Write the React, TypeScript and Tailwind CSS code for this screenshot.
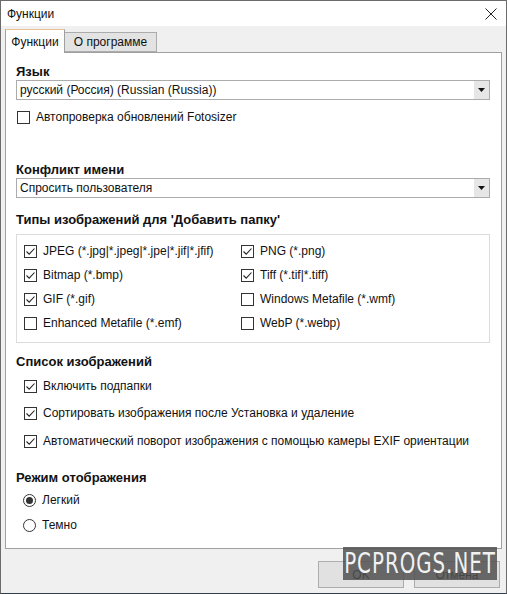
import React from 'react';

const UI_FONT = "font-['Liberation_Sans',Arial,sans-serif]";

function CheckBox({ checked }: { checked?: boolean }) {
  return (
    <span className="flex h-[13px] w-[13px] shrink-0 items-center justify-center border border-[#333] bg-white">
      {checked && (
        <svg width="11" height="11" viewBox="0 0 11 11" fill="none">
          <path d="M1.5 5.5 L4.2 8.2 L9.5 2.5" stroke="#222" strokeWidth="1.1" />
        </svg>
      )}
    </span>
  );
}

function Radio({ checked }: { checked?: boolean }) {
  return (
    <span className="flex h-[13px] w-[13px] shrink-0 items-center justify-center rounded-full border border-[#333] bg-white">
      {checked && <span className="h-[7px] w-[7px] rounded-full bg-[#333]" />}
    </span>
  );
}

function Option({ label, checked, className = '' }: { label: string; checked?: boolean; className?: string }) {
  return (
    <div className={`flex h-[15px] items-center gap-[6px] ${className}`}>
      <CheckBox checked={checked} />
      <span className="text-[12px] leading-[15px] text-[#111]">{label}</span>
    </div>
  );
}

function Select({ value, className = '' }: { value: string; className?: string }) {
  return (
    <div className={`flex h-[20px] items-stretch border border-[#acacac] bg-white ${className}`}>
      <span className="flex-1 pl-[3px] text-[12px] leading-[18px] text-[#111]">{value}</span>
      <span className="flex w-[15px] items-center justify-center bg-[#e6e6e6]">
        <svg width="7" height="4" viewBox="0 0 7 4">
          <path d="M0 0 H7 L3.5 4 Z" fill="#111" />
        </svg>
      </span>
    </div>
  );
}

function SectionLabel({ children, className = '' }: { children: React.ReactNode; className?: string }) {
  return <div className={`text-[13px] font-bold leading-[15px] text-[#111] ${className}`}>{children}</div>;
}

const imageTypes: [string, boolean][] = [
  ['JPEG (*.jpg|*.jpeg|*.jpe|*.jif|*.jfif)', true],
  ['PNG (*.png)', true],
  ['Bitmap (*.bmp)', true],
  ['Tiff (*.tif|*.tiff)', true],
  ['GIF (*.gif)', true],
  ['Windows Metafile (*.wmf)', false],
  ['Enhanced Metafile (*.emf)', false],
  ['WebP (*.webp)', false],
];

export default function App() {
  return (
    <div className={`relative flex h-[594px] w-[507px] flex-col border border-[#6b6b6b] border-b-[#2f3d4c] bg-[#f0f0f0] ${UI_FONT}`}>
      {/* Title bar */}
      <div className="flex h-[25px] shrink-0 items-center justify-between bg-white pl-[6px] pr-[9px]">
        <span className="text-[12px] text-[#111]">Функции</span>
        <svg width="12" height="12" viewBox="0 0 12 12">
          <path d="M0.5 0.5 L11.5 11.5 M11.5 0.5 L0.5 11.5" stroke="#222" strokeWidth="1" />
        </svg>
      </div>

      {/* Tabs */}
      <div className="flex h-[26px] shrink-0 items-end px-[4px]">
        <div className="relative z-10 -mb-px flex h-[24px] w-[60px] items-center justify-center border border-b-0 border-[#a0a0a0] border-t-[#e8c38f] bg-white text-[12px] text-[#111]">
          Функции
        </div>
        <div className="flex h-[20px] w-[92px] items-center justify-center border border-l-0 border-[#acacac] bg-[#e3e3e3] text-[12px] text-[#111]">
          О программе
        </div>
      </div>

      {/* Tab page */}
      <div className="mx-[4px] h-[497px] shrink-0 border border-[#a0a0a0] bg-white pl-[10px] pr-[11px]">
        <SectionLabel className="mt-[11px]">Язык</SectionLabel>
        <Select className="mt-[1px]" value="русский (Россия) (Russian (Russia))" />
        <Option className="mt-[10px] pl-px" label="Автопроверка обновлений Fotosizer" />

        <SectionLabel className="mt-[37px]">Конфликт имени</SectionLabel>
        <Select className="mt-[1px]" value="Спросить пользователя" />

        <SectionLabel className="mt-[14px]">Типы изображений для 'Добавить папку'</SectionLabel>
        <div className="mt-[7px] grid grid-cols-[217px_1fr] border border-[#dcdcdc] pb-[7px] pl-[7px] pt-[4px]">
          {imageTypes.map(([label, checked]) => (
            <div key={label} className="flex h-[24px] items-center">
              <Option label={label} checked={checked} />
            </div>
          ))}
        </div>

        <SectionLabel className="mt-[11px]">Список изображений</SectionLabel>
        <div className="pl-[8px]">
          <Option className="mt-[10px]" checked label="Включить подпапки" />
          <Option className="mt-[12px]" checked label="Сортировать изображения после Установка и удаление" />
          <Option className="mt-[13px]" checked label="Автоматический поворот изображения с помощью камеры EXIF ориентации" />
        </div>

        <SectionLabel className="mt-[21px]">Режим отображения</SectionLabel>
        <div className="pl-[7px]">
          <div className="mt-[8px] flex h-[15px] items-center gap-[6px]">
            <Radio checked />
            <span className="text-[12px] leading-[15px] text-[#111]">Легкий</span>
          </div>
          <div className="mt-[10px] flex h-[15px] items-center gap-[6px]">
            <Radio />
            <span className="text-[12px] leading-[15px] text-[#111]">Темно</span>
          </div>
        </div>
      </div>

      {/* Dialog buttons */}
      <div className="mt-[12px] flex justify-end gap-[10px] pr-[6px]">
        <button className="h-[27px] w-[86px] border border-[#adadad] bg-[#e1e1e1] text-[12px] text-[#111]">OK</button>
        <button className="h-[27px] w-[86px] border border-[#adadad] bg-[#e1e1e1] text-[12px] text-[#111]">Отмена</button>
      </div>

      {/* Site stamp */}
      <div className="absolute left-[342px] top-[546px] flex h-[33px] w-[154px] items-center justify-center bg-[#505050]/85">
        <span className="font-['DejaVu_Sans_Condensed','DejaVu_Sans',sans-serif] text-[22px] leading-none tracking-[1px] text-[#f2f2f2] [transform:scaleY(1.3)]">
          PCPROGS.NET
        </span>
      </div>
    </div>
  );
}
